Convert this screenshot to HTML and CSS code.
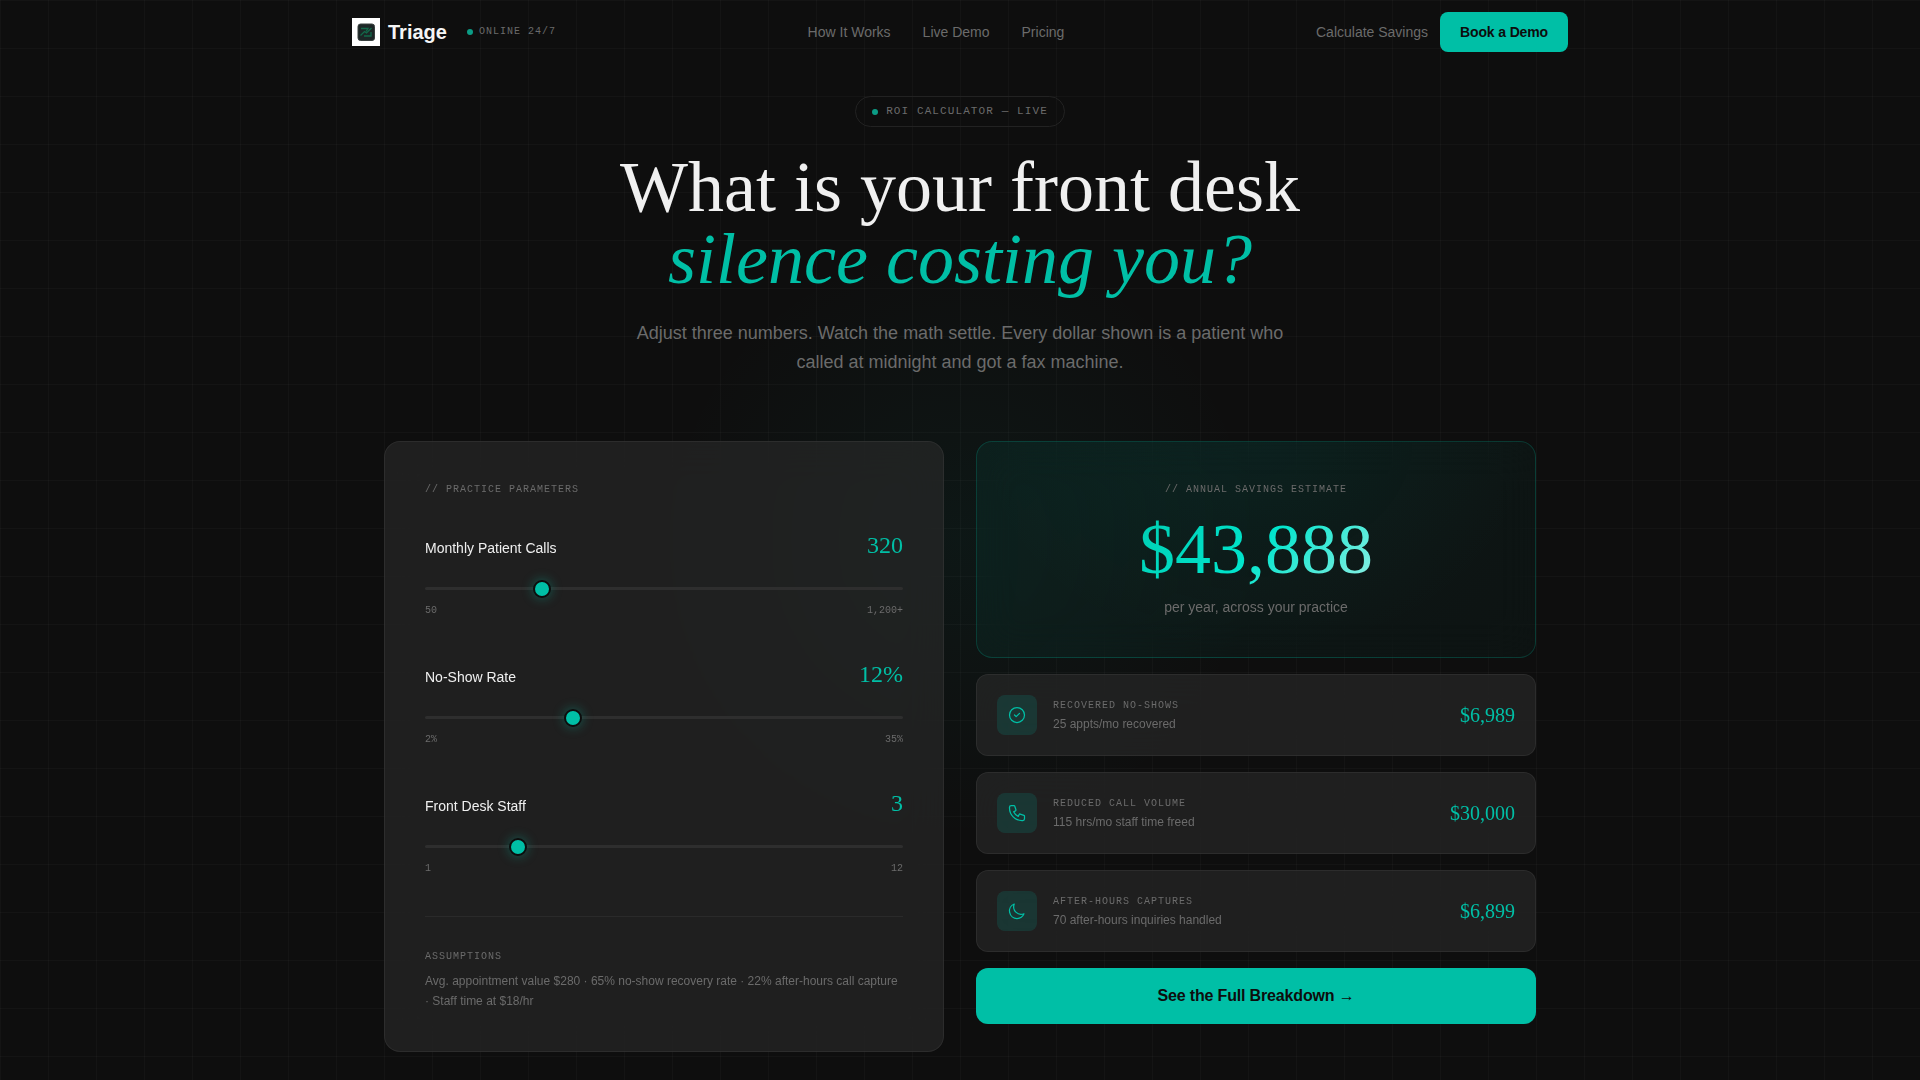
FILE: index.html
```html
<!DOCTYPE html>
<html lang="en">

<head>
    <meta charset="UTF-8">
    <meta name="viewport" content="width=device-width, initial-scale=1.0">
    <title>Triage - ROI Calculator</title>
    <link rel="stylesheet" href="styles.css">
</head>

<body>

    <header class="nav">
        <div class="nav-brand">
            <a href="#" class="logo">
                <svg class="logo-mark" viewBox="0 0 28 28" aria-hidden="true">
                    <rect width="28" height="28" fill="#fff" />
                    <rect x="6" y="6" width="16.5" height="16.5" rx="2.5" fill="#1c2626" stroke="#39403f" />
                    <path d="M8.5 17.5l4-4 2 1.5 5-5M9 10.5h7l-2 3M12 18h7v-4" fill="none" stroke="#12694a" stroke-width="1.3" />
                </svg>
                Triage
            </a>
            <span class="status"><span class="dot"></span>ONLINE 24/7</span>
        </div>
        <nav class="nav-links">
            <a href="#how">How It Works</a>
            <a href="#demo">Live Demo</a>
            <a href="#pricing">Pricing</a>
        </nav>
        <div class="nav-actions">
            <a href="#calculator">Calculate Savings</a>
            <button type="button" class="btn btn-small">Book a Demo</button>
        </div>
    </header>

    <main class="page">
        <section class="hero">
            <span class="badge"><span class="dot"></span>ROI CALCULATOR — LIVE</span>
            <h1>What is your front desk<br><em>silence costing you?</em></h1>
            <p>Adjust three numbers. Watch the math settle. Every dollar shown is a patient who called at midnight and got a fax machine.</p>
        </section>

        <section class="calculator" id="calculator">
            <div class="card params">
                <h2 class="eyebrow">// PRACTICE PARAMETERS</h2>

                <div class="param">
                    <div class="param-head">
                        <label for="calls">Monthly Patient Calls</label>
                        <output class="param-value" for="calls">320</output>
                    </div>
                    <input type="range" id="calls" min="50" max="1200" step="10" value="320">
                    <div class="param-range"><span>50</span><span>1,200+</span></div>
                </div>

                <div class="param">
                    <div class="param-head">
                        <label for="noshow">No-Show Rate</label>
                        <output class="param-value" for="noshow">12%</output>
                    </div>
                    <input type="range" id="noshow" min="2" max="35" value="12">
                    <div class="param-range"><span>2%</span><span>35%</span></div>
                </div>

                <div class="param">
                    <div class="param-head">
                        <label for="staff">Front Desk Staff</label>
                        <output class="param-value" for="staff">3</output>
                    </div>
                    <input type="range" id="staff" min="1" max="12" value="3">
                    <div class="param-range"><span>1</span><span>12</span></div>
                </div>

                <div class="assumptions">
                    <h3 class="eyebrow">ASSUMPTIONS</h3>
                    <p>Avg. appointment value $280 · 65% no-show recovery rate · 22% after-hours call capture · Staff time at $18/hr</p>
                </div>
            </div>

            <div class="results">
                <div class="card total">
                    <h2 class="eyebrow">// ANNUAL SAVINGS ESTIMATE</h2>
                    <div class="total-value">$43,888</div>
                    <p>per year, across your practice</p>
                </div>

                <div class="card item">
                    <span class="item-icon">
                        <svg viewBox="0 0 24 24" aria-hidden="true">
                            <path d="M9 12l2 2 4-4m6 2a9 9 0 11-18 0 9 9 0 0118 0z" />
                        </svg>
                    </span>
                    <div class="item-text">
                        <h3 class="eyebrow">RECOVERED NO-SHOWS</h3>
                        <p>25 appts/mo recovered</p>
                    </div>
                    <span class="item-value">$6,989</span>
                </div>

                <div class="card item">
                    <span class="item-icon">
                        <svg viewBox="0 0 24 24" aria-hidden="true">
                            <path d="M3 5a2 2 0 012-2h3.28a1 1 0 01.948.684l1.498 4.493a1 1 0 01-.502 1.21l-2.257 1.13a11.042 11.042 0 005.516 5.516l1.13-2.257a1 1 0 011.21-.502l4.493 1.498a1 1 0 01.684.949V19a2 2 0 01-2 2h-1C9.716 21 3 14.284 3 6V5z" />
                        </svg>
                    </span>
                    <div class="item-text">
                        <h3 class="eyebrow">REDUCED CALL VOLUME</h3>
                        <p>115 hrs/mo staff time freed</p>
                    </div>
                    <span class="item-value">$30,000</span>
                </div>

                <div class="card item">
                    <span class="item-icon">
                        <svg viewBox="0 0 24 24" aria-hidden="true">
                            <path d="M20.354 15.354A9 9 0 018.646 3.646 9.003 9.003 0 0012 21a9.003 9.003 0 008.354-5.646z" />
                        </svg>
                    </span>
                    <div class="item-text">
                        <h3 class="eyebrow">AFTER-HOURS CAPTURES</h3>
                        <p>70 after-hours inquiries handled</p>
                    </div>
                    <span class="item-value">$6,899</span>
                </div>

                <button type="button" class="btn btn-large">See the Full Breakdown →</button>
            </div>
        </section>
    </main>

</body>

</html>
```
FILE: styles.css
```css
* {
    box-sizing: border-box;
    margin: 0;
    padding: 0;
}

body {
    min-height: 100vh;
    font-family: "Liberation Sans", Arial, sans-serif;
    font-size: 14px;
    line-height: 20px;
    color: #6b6b6b;
    background-color: #0e0e0e;
    background-image:
        radial-gradient(circle at 50% 540px, rgba(0, 191, 166, 0.05), transparent 300px),
        linear-gradient(rgba(255, 255, 255, 0.025) 1px, transparent 1px),
        linear-gradient(90deg, rgba(255, 255, 255, 0.025) 1px, transparent 1px);
    background-size: 100% 100%, 48px 48px, 48px 48px;
}

a {
    color: inherit;
    text-decoration: none;
}

/* Navigation */
.nav {
    display: flex;
    justify-content: space-between;
    align-items: center;
    max-width: 1280px;
    height: 64px;
    margin: 0 auto;
    padding: 0 32px;
}

.nav-brand,
.logo,
.nav-links,
.nav-actions,
.status {
    display: flex;
    align-items: center;
}

.nav-brand {
    gap: 20px;
}

.logo {
    gap: 8px;
    font-size: 20px;
    font-weight: bold;
    color: #f5f5f5;
}

.logo-mark {
    width: 28px;
    height: 28px;
}

.status {
    gap: 6px;
    font-family: "Liberation Mono", monospace;
    font-size: 10px;
    letter-spacing: 0.1em;
}

.dot {
    width: 6px;
    height: 6px;
    border-radius: 50%;
    background: #0b9c85;
}

.nav-links {
    gap: 32px;
}

.nav-actions {
    gap: 12px;
}

.btn {
    border: none;
    background: #00bfa6;
    color: #0d0d0d;
    font-family: inherit;
    font-weight: bold;
    letter-spacing: -0.01em;
    cursor: pointer;
}

.btn:hover {
    background: #00d4b8;
}

.btn-small {
    height: 40px;
    padding: 0 20px;
    border-radius: 8px;
    font-size: 14px;
}

.btn-large {
    height: 56px;
    border-radius: 12px;
    font-size: 16px;
}

/* Hero */
.page {
    max-width: 1216px;
    margin: 0 auto;
    padding: 32px 32px 28px;
}

.hero {
    display: flex;
    flex-direction: column;
    align-items: center;
    gap: 24px;
    margin-bottom: 64px;
    text-align: center;
}

.badge {
    display: flex;
    align-items: center;
    gap: 8px;
    padding: 6px 16px;
    border: 1px solid #222;
    border-radius: 16px;
    font-family: "Liberation Mono", monospace;
    font-size: 11px;
    line-height: 17px;
    letter-spacing: 0.1em;
}

.hero h1 {
    font-family: "Liberation Serif", serif;
    font-size: 72px;
    font-weight: normal;
    line-height: 72px;
    color: #f0f0f0;
}

.hero em {
    color: #00bfa6;
}

.hero p {
    max-width: 672px;
    font-size: 18px;
    line-height: 29px;
}

/* Calculator */
.calculator {
    display: grid;
    grid-template-columns: 1fr 1fr;
    align-items: start;
    gap: 32px;
}

.card {
    border: 1px solid rgba(255, 255, 255, 0.06);
    background: rgba(42, 42, 42, 0.65);
    backdrop-filter: blur(20px);
}

.eyebrow {
    font-family: "Liberation Mono", monospace;
    font-size: 10px;
    font-weight: normal;
    line-height: 15px;
    letter-spacing: 0.1em;
}

.params {
    padding: 40px;
    border-radius: 16px;
}

.param {
    display: flex;
    flex-direction: column;
    margin-bottom: 40px;
}

.params > .eyebrow {
    margin-bottom: 32px;
}

.param-head,
.param-range {
    display: flex;
    justify-content: space-between;
    align-items: baseline;
}

.param-head label {
    color: #f0f0f0;
}

.param-value {
    font-family: "Liberation Serif", serif;
    font-size: 24px;
    line-height: 32px;
    color: #00bfa6;
}

.param-range {
    font-family: "Liberation Mono", monospace;
    font-size: 10px;
    line-height: 15px;
}

input[type="range"] {
    appearance: none;
    width: 100%;
    height: 3px;
    margin: 26px 0 13px;
    border-radius: 2px;
    background: #2e2e2e;
    cursor: pointer;
}

input[type="range"]::-webkit-slider-thumb {
    appearance: none;
    width: 18px;
    height: 18px;
    border: 2px solid #0d0d0d;
    border-radius: 50%;
    background: #00bfa6;
    box-shadow: 0 0 12px rgba(0, 191, 166, 0.4);
}

.assumptions {
    padding-top: 32px;
    border-top: 1px solid #2a2a2a;
}

.assumptions p {
    margin-top: 7px;
    font-size: 12px;
    line-height: 20px;
}

/* Results */
.results {
    display: flex;
    flex-direction: column;
    gap: 16px;
}

.total {
    padding: 40px;
    border-color: rgba(0, 191, 166, 0.22);
    border-radius: 16px;
    background: radial-gradient(ellipse at 50% 0, rgba(0, 191, 166, 0.06), transparent 70%), linear-gradient(135deg, rgba(0, 191, 166, 0.07), rgba(0, 191, 166, 0.03));
    text-align: center;
}

.total-value {
    width: fit-content;
    margin: 16px auto 12px;
    font-family: "Liberation Serif", serif;
    font-size: 72px;
    line-height: 72px;
    background: linear-gradient(135deg, #00cdb2, #00e5cc 50%, #8ff0e4);
    background-clip: text;
    color: transparent;
}

.item {
    display: flex;
    align-items: center;
    gap: 16px;
    padding: 20px;
    border-radius: 12px;
}

.item-icon {
    display: flex;
    justify-content: center;
    align-items: center;
    width: 40px;
    height: 40px;
    border-radius: 8px;
    background: rgba(0, 191, 166, 0.15);
}

.item-icon svg {
    width: 20px;
    height: 20px;
    fill: none;
    stroke: #00bfa6;
    stroke-width: 1.5;
    stroke-linecap: round;
    stroke-linejoin: round;
}

.item-text {
    flex: 1;
}

.item-text .eyebrow,
.item-text p {
    line-height: 18px;
}

.item-text p {
    font-size: 12px;
}

.item-value {
    font-family: "Liberation Serif", serif;
    font-size: 20px;
    color: #00bfa6;
}

@media (max-width: 900px) {
    .nav-links {
        display: none;
    }

    .calculator {
        grid-template-columns: 1fr;
    }
}
```
